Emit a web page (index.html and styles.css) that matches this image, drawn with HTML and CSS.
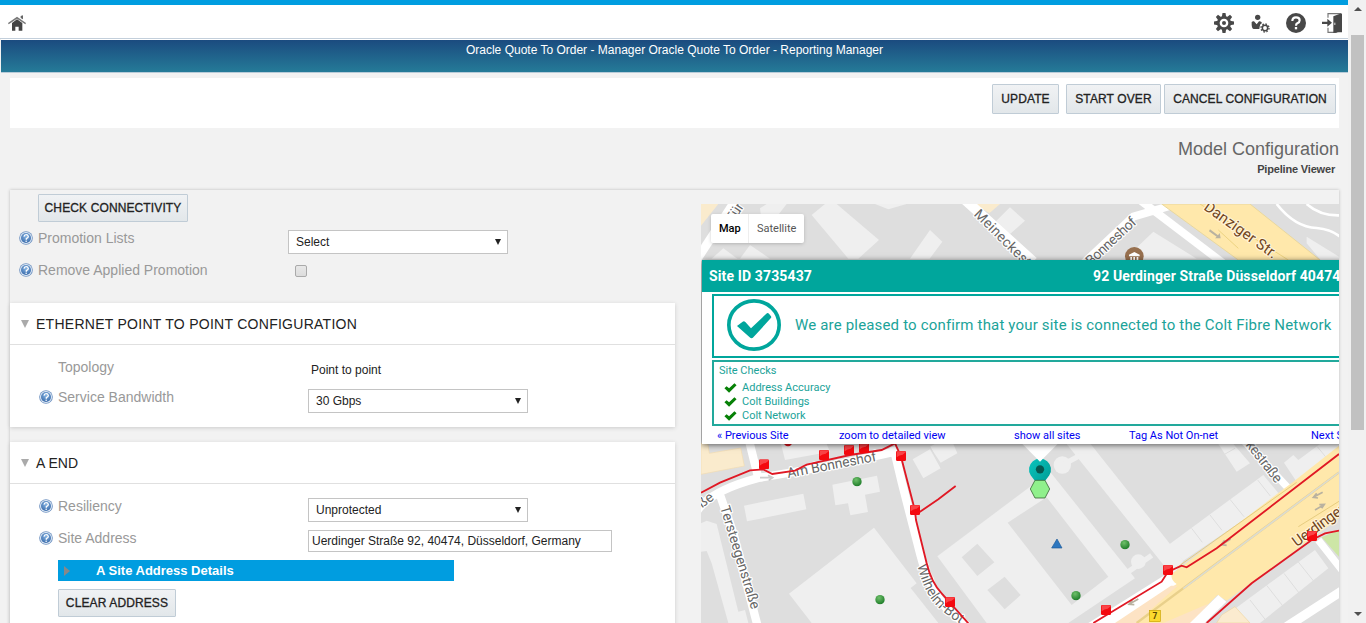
FILE: index.html
```html
<!DOCTYPE html>
<html lang="en">
<head>
<meta charset="utf-8">
<title>Model Configuration</title>
<link rel="stylesheet" href="styles.css">
</head>
<body>
<svg width="0" height="0" class="defs">
  <defs>
    <radialGradient id="helpFill" cx=".5" cy=".35" r=".7"><stop offset="0" stop-color="#86b4e2"/><stop offset="1" stop-color="#3567a8"/></radialGradient>
    <radialGradient id="dotFill" cx=".4" cy=".3" r=".7"><stop offset="0" stop-color="#6fc06a"/><stop offset="1" stop-color="#1f7d2a"/></radialGradient>
    <linearGradient id="pinFill" x1="0" y1="0" x2="1" y2="1"><stop offset="0" stop-color="#08c4bd"/><stop offset="1" stop-color="#009790"/></linearGradient>
    <symbol id="help" viewBox="0 0 42 42">
      <circle cx="21" cy="21" r="20.5" fill="#7194c2"/><circle cx="21" cy="21" r="18" fill="#dfe9f5"/><circle cx="21" cy="21" r="15" fill="url(#helpFill)"/>
      <path d="M15 17q1-6 6.500-6t6.500 5.500q0 3.500-6 6.500v3" fill="none" stroke="#fff" stroke-width="4"/><circle cx="21.500" cy="30.500" r="2.300" fill="#fff"/>
    </symbol>
    <symbol id="square" viewBox="0 0 30 30">
      <rect x="0" y="0" width="30" height="30" rx="4" fill="#f4090f"/><path d="M2 4q0-3 3-3h20q3 0 4 3l-9 7q-10 0-18 8z" fill="#fa4347"/>
    </symbol>
    <symbol id="dot" viewBox="0 0 30 30"><circle cx="15" cy="15" r="14" fill="url(#dotFill)"/></symbol>
    <symbol id="tick" viewBox="0 0 36 28"><path d="M1 15l6-6 7 6L29 1l6 5-21 21z" fill="#078107"/></symbol>
  </defs>
</svg>
<div class="window">
  <div class="page">
    <header class="topbar">
      <svg class="home" viewBox="24 45 54 51"><path d="M24 69L51 50l27 19-2 4-25-17-25 17z" fill="#777"/><path d="M36 69l15-11 16 11v23H56V80H46v12H36z" fill="#444"/><path d="M62 48l7-2v12l-7-4z" fill="#666"/></svg>
      <nav class="tools">
        <svg viewBox="342 39 60 60"><g fill="#484848"><circle cx="372" cy="69" r="21"/><g id="teeth"><path d="M367.500 39h9l2 12h-13zM367.500 99h9l2-12h-13z"/><path d="M342 64.500v9l12 2V62.500zM402 64.500v9l-12 2V62.500z"/></g><use href="#teeth" transform="rotate(45 372 69)"/></g><circle cx="372" cy="69" r="13" fill="#fff"/><circle cx="372" cy="69" r="6" fill="#484848"/></svg>
        <svg viewBox="450 39 60 60"><circle cx="473" cy="52" r="8" fill="#484848"/><path d="M455 66q3-3 7-2l8 9 7-9q7-1 9 5-7 4-7 11l-1 7h-17q-7-1-6-21z" fill="#484848"/><circle cx="495" cy="84" r="8" fill="none" stroke="#484848" stroke-width="4.500"/><circle cx="495" cy="84" r="12" fill="none" stroke="#484848" stroke-width="4" stroke-dasharray="4.700 4.700"/></svg>
        <svg viewBox="558 39 60 60"><circle cx="588" cy="69" r="30" fill="#484848"/><path d="M577 63q0-11 11-11 11 0 11 9 0 6-7 9-4 2-4 7" fill="none" stroke="#fff" stroke-width="6.500"/><rect x="584.500" y="81" width="7" height="7" fill="#fff"/></svg>
        <svg viewBox="666 39 60 60"><path d="M684 53V41h40M684 83v14h26" fill="none" stroke="#777" stroke-width="3.500"/><path d="M700 49l20-8h6v56h-10l-16 2z" fill="#484848"/><path d="M666 65h16v-9l14 12-14 12v-8h-16z" fill="#484848"/><rect x="703" y="68" width="3" height="7" fill="#ddd"/></svg>
      </nav>
    </header>
    <div class="banner">Oracle Quote To Order - Manager Oracle Quote To Order - Reporting Manager</div>
    <div class="actions">
      <button class="btn update">UPDATE</button><button class="btn restart">START OVER</button><button class="btn cancel">CANCEL CONFIGURATION</button>
    </div>
    <div class="heading"><h1>Model Configuration</h1><h2>Pipeline Viewer</h2></div>
    <main class="panel">
      <div class="form">
        <button class="btn connect">CHECK CONNECTIVITY</button>
        <div class="row"><svg class="help"><use href="#help"/></svg><span class="label">Promotion Lists</span><div class="select">Select<i></i></div></div>
        <div class="row"><svg class="help"><use href="#help"/></svg><span class="label">Remove Applied Promotion</span><span class="check"></span></div>
        <section class="card first">
          <h3><i></i><span class="wide">ETHERNET POINT TO POINT CONFIGURATION</span></h3>
          <div class="body">
            <div class="row"><span class="help"></span><span class="label">Topology</span><span class="value">Point to point</span></div>
            <div class="row"><svg class="help"><use href="#help"/></svg><span class="label">Service Bandwidth</span><div class="select">30 Gbps<i></i></div></div>
          </div>
        </section>
        <section class="card second">
          <h3><i></i><span>A END</span></h3>
          <div class="body">
            <div class="row"><svg class="help"><use href="#help"/></svg><span class="label">Resiliency</span><div class="select">Unprotected<i></i></div></div>
            <div class="row"><svg class="help"><use href="#help"/></svg><span class="label">Site Address</span><div class="input">Uerdinger Straße 92, 40474, Düsseldorf, Germany</div></div>
            <div class="details"><i></i>A Site Address Details</div>
            <button class="btn clear">CLEAR ADDRESS</button>
          </div>
        </section>
      </div>
      <div class="map">
        <svg class="canvas" viewBox="701 204 638 419">
          <rect x="701" y="204" width="638" height="419" fill="#dedede"/>
          <!-- streets north of the site -->
          <g transform="translate(700 195) scale(.33333)">
            <path d="M3 27h52L3 92z" fill="#faebcd"/>
            <path d="M110 10L-10 195" stroke="#fff" stroke-width="26"/>
            <g fill="#efefef"><path d="M335 60l40-33h35l127 108-62 56h-30zM630 191l60-86 37 35-38 51zM35 191l35-31 42 31zM525 27h95l-55 16zM180 40l20-13h60l-70 90zM150 150l60 41h-90zM885 82l45-45 45 40-45 40zM1275 191l85-81 130 81zM1820 125l97 60v10h-55l-42-50z"/></g>
            <path d="M825 27h75l-32 28z" fill="#faebcd"/>
            <g fill="none" stroke="#fff"><path d="M790 10l210 190" stroke-width="30"/><path d="M1140 215l160-150 120-35M1320 15l250 190" stroke-width="24"/><path d="M1730 27q55 70 120 72 50 5 77 32M1820 27q40 36 100 34" stroke-width="8"/></g>
            <path d="M1385 27h265l210 168h-245z" fill="#ffe8ab" stroke="#e8d79f" stroke-width="3"/>
            <path d="M1500 27l265 168M1555 105l60 55" stroke="#e9cf78" stroke-width="2.500"/>
            <path d="M1530 103l24 18 5-7 3 16h-17l5-5-23-16z" fill="#b9b2a0"/>
            <circle cx="1303" cy="184" r="28" fill="#97704f"/><path d="M1287 179l16-8 16 8v5h-32zM1291 186h5v12h-5zM1300 186h5v12h-5zM1310 186h5v12h-5z" fill="#fff"/>
            <g class="street">
              <text transform="translate(100 84) rotate(-57)">Für</text>
              <text transform="translate(820 60) rotate(45)" textLength="222">Meineckest</text>
              <text transform="translate(1173 214) rotate(-43)" textLength="190">Bonneshof</text>
              <text class="major" transform="translate(1509 42) rotate(35.500)" textLength="258">Danziger Str.</text>
            </g>
          </g>
          <!-- streets south of the site -->
          <g transform="translate(700 440) scale(.33333)">
            <path d="M3 10h20l5 30 94-16 11 54L3 103z" fill="#faebcd" stroke="#f3ddb0" stroke-width="2"/>
            <g fill="#efefef">
              <path d="M243 12l12 48 135-25-10-23zM132 197l178-36 9 47-178 36zM397 134l134-27 9 48-45 9 9 52-53 10-7-36-38 6zM267 461l255-198 128 167-18 14 83 105H335z"/>
              <path d="M3 250l17-8 30 10 65 263 20-5 10 39H85L35 370l-15-37-17 2zM638 58l52-30 32 57-52 30zM690 20l15-8h55l12 28-50 28z"/>
              <path d="M712 349L1050 95l20 25 235 295-200 134H860zM1100 12h72l278 350-25 38-30-20z"/>
              <circle cx="1087" cy="75" r="26"/><circle cx="1315" cy="365" r="22"/>
              <path d="M1405 315l285-210 50 60-290 197zM1555 12h45l50 58-40 25zM1752 68l28-23 15 15 65-48h57v33l-127 80zM1600 510l245-180 40 55-205 164h-50z"/>
            </g>
            <path d="M1087 75l52-28M1275 402l80-56" stroke="#efefef" stroke-width="16"/>
            <path d="M785 352l47-41 51 56-51 41zM862 450l52-40 48 55-48 43zM923 248l117-76 185 238-110 85z" fill="#dedede"/>
            <path d="M1475 265l32 42M1530 225l36 46M1590 178l42 52M1673 120l38 48M1570 45l35-20M1650 480l50 64M1700 436l50 64M1752 400l46 60M1795 366l48 60M1852 20l45 55M690 20l34 65" stroke="#dedede" stroke-width="3"/>
            <g fill="none" stroke="#fff">
              <path d="M148 5l26 105M-10 215q38-62 185-101 120-20 245-42l165-37M55 150l45 130 72 275M580 20l26 110 54 210q28 110 80 165l70 60" stroke-width="25"/>
              <path d="M1625-5l145 155M1855 300l72 92" stroke-width="22"/><path d="M1760 560l170-110" stroke-width="28"/>
            </g>
            <path d="M1165 549l245-154 40 35-195 119z" fill="#fff"/>
            <path d="M1415 402l365-277 137-108v218l-337 247-28-17-80 84h-217l175-117q-19-12-15-30z" fill="#ffe8ab"/>
            <path d="M1245 549l168-112h20l-125 112zM1390 549l135-58-43 58z" fill="#fde3c4"/>
            <path d="M1470 549l85-84 24 20-65 64z" fill="#fff"/>
            <path d="M1310 549l607-452" stroke="#e9d08b" stroke-width="7"/><path d="M1450 446l467-349" stroke="#dcdcd0" stroke-width="5"/><path d="M1420 390l370-263M1795 260l122-76" stroke="#e6cc7e" stroke-width="3"/>
            <path d="M1865 292l52-22v80z" fill="#cde6a6"/><path d="M1565 525l40-25 45 49h-100z" fill="#fbebcf" stroke="#f0d6a0" stroke-width="2"/>
            <g fill="none" stroke="#b9b2a0" stroke-width="5"><path d="M1868 157l-28 15m10-12l-10 12 14 2M1845 210l27-16m-14 0l15-1-8 12M1592 297l-28 17m10-13l-10 13 16 2M1315 477l-28 16m10-13l-10 13 16 1"/><path d="M180 113h36m-12-7l14 7-12 8" stroke="#ccc"/></g>
            <g class="street">
              <text transform="translate(264 114) rotate(-11)" textLength="272">Am Bonneshof</text>
              <text transform="translate(60 202) rotate(73)" textLength="322">Tersteegenstraße</text>
              <text transform="translate(6 205) rotate(-36)">ße</text>
              <path id="wilhelm" d="M652 376q17 70 50 112 34 40 130 96" fill="none"/>
              <text><textPath href="#wilhelm">Wilhelm-Bot</textPath></text>
              <text transform="translate(1636 15) rotate(52)" textLength="148">kestraße</text>
              <text class="major" transform="translate(1790 322) rotate(-36)" textLength="184">Uerdinger</text>
            </g>
            <path d="M3 158l57-30 90-37 40-3 27 14 68-10 35-18 130-29 95-15 40-20 18 40 42 162 3 28 32 130q15 60 45 90l80 90M650 222l65-44 52-40M1180 549l205-124 19-30 41-18 15 5 90-57 367-283M1520 549l135-119 180-130 40-20 42-8" fill="none" stroke="#e01824" stroke-width="5.500"/>
            <circle cx="264" cy="6" r="13" fill="#d9101a"/>
            <g id="nodes">
              <use href="#square" x="177" y="58" width="30" height="30"/><use href="#square" x="357" y="30" width="30" height="30"/><use href="#square" x="432" y="15" width="30" height="30"/><use href="#square" x="477" y="9" width="30" height="30"/><use href="#square" x="588" y="33" width="30" height="30"/><use href="#square" x="630" y="195" width="30" height="30"/><use href="#square" x="735" y="471" width="30" height="30"/><use href="#square" x="1389" y="375" width="30" height="30"/><use href="#square" x="1203" y="495" width="30" height="30"/><use href="#square" x="1821" y="273" width="30" height="30"/>
              <use href="#dot" x="456" y="110" width="30" height="30"/><use href="#dot" x="525" y="464" width="30" height="30"/><use href="#dot" x="1260" y="299" width="30" height="30"/><use href="#dot" x="1113" y="452" width="30" height="30"/>
            </g>
            <path d="M1071 297l15 27h-31z" fill="#2d77bf" stroke="#1e5b98" stroke-width="2"/>
            <rect x="1349" y="511" width="32" height="34" fill="#fbd92f" stroke="#c9a400" stroke-width="2"/><text x="1365" y="536" class="badge">7</text>
            <path d="M1020 146q-15-24-28-40a33 33 0 1 1 56 0q-13 16-28 40z" fill="url(#pinFill)"/><circle cx="1020" cy="88" r="12.500" fill="#065750"/>
            <path d="M991 147l14-26h30l14 26-14 27h-30z" fill="#90f08c" stroke="#3c6b3a" stroke-width="2.500"/>
            <path d="M965 10h110l-55 55z" fill="#fff"/>
          </g>
        </svg>
        <div class="maptype"><b>Map</b><span>Satellite</span></div>
        <div class="info">
          <div class="info-title"><span class="site">Site ID 3735437</span><span class="addr">92 Uerdinger Straße Düsseldorf 40474</span></div>
          <div class="confirm">
            <svg viewBox="81 312 162 156"><ellipse cx="162" cy="390" rx="75.500" ry="72.500" fill="none" stroke="#00a69c" stroke-width="11"/><path d="M111 393l17-13q4-3 8 1l17 19 46-44q4-4 8 0l6 8q2 3-1 6l-52 57q-5 6-11 0z" fill="#00a69c"/></svg>
            <span>We are pleased to confirm that your site is connected to the Colt Fibre Network</span>
          </div>
          <div class="checks">
            <p>Site Checks</p>
            <ul><li><svg><use href="#tick"/></svg>Address Accuracy</li><li><svg><use href="#tick"/></svg>Colt Buildings</li><li><svg><use href="#tick"/></svg>Colt Network</li></ul>
          </div>
          <div class="links"><a>« Previous Site</a><a>zoom to detailed view</a><a>show all sites</a><a>Tag As Not On-net</a><a>Next Site</a></div>
        </div>
      </div>
    </main>
  </div>
  <div class="scrollbar"><i class="up"></i><div class="thumb"></div><i class="down"></i></div>
</div>
</body>
</html>
```
FILE: styles.css
```css
* { box-sizing: border-box; }
body { margin: 0; overflow: hidden; font: 12px/14px "Liberation Sans", Arial, sans-serif; color: #222; background: #f2f2f2; }
h1, h2, h3, p, ul { margin: 0; padding: 0; font-weight: normal; }
.defs { position: absolute; }
.window { display: flex; height: 623px; overflow: hidden; }
.page { width: 1348px; height: 623px; overflow: hidden; }

.topbar { display: flex; justify-content: space-between; align-items: flex-start; height: 39px; padding: 8px 6px 0 8px; background: #fff; border-top: 5px solid #009de0; border-bottom: 1px solid #c3cfdb; }
.home { width: 18px; height: 17px; margin-top: 2px; }
.tools { display: flex; gap: 16px; }
.tools svg { width: 20px; height: 20px; }
.banner { height: 34px; margin: 0 0 5px 1px; padding-top: 3px; border-top: 1px solid #fff; border-bottom: 1px solid #b8cbd8; background: linear-gradient(#1b4b7f, #257b98); color: #fff; text-align: center; }

.btn { height: 28px; padding: 0; border: 1px solid #c0ccd6; border-radius: 1px; background: linear-gradient(#f0f2f4, #e2e7ea); color: #222; font: 12px "Liberation Sans", Arial, sans-serif; letter-spacing: .12px; -webkit-text-stroke: .3px #222; white-space: nowrap; }
.actions { display: flex; justify-content: flex-end; height: 50px; margin: 0 9px 0 10px; padding: 6px 3px 0 0; background: #fff; }
.actions .btn { height: 30px; }
.update { width: 67px; margin-right: 7px; }
.restart { width: 95px; margin-right: 3px; }
.cancel { width: 172px; }
.heading { height: 62px; padding: 10px 9px 0 0; text-align: right; }
.heading h1 { font-size: 18px; line-height: 22px; color: #666; }
.heading h2 { padding: 2px 4px 0 0; font-size: 11px; font-weight: bold; letter-spacing: -.18px; color: #444; }

.panel { display: flex; justify-content: space-between; height: 450px; margin: 0 9px 0 10px; box-shadow: 0 0 3px #bbb; }
.form { width: 665px; padding-top: 4px; }
.connect { display: block; width: 150px; margin-left: 28px; }
.row { display: flex; align-items: center; height: 32px; padding-left: 9px; }
.help { width: 14px; height: 14px; margin-right: 5px; }
.label { width: 250px; font-size: 14px; line-height: 16px; color: #999; }
.select { display: flex; align-items: center; justify-content: space-between; width: 220px; height: 24px; margin-top: 8px; padding: 0 6px 0 7px; border: 1px solid #c4c4c4; background: #fff; }
.select i { border: 3.500px solid transparent; border-top: 6px solid #222; border-bottom: 0; }
.check { width: 12px; height: 12px; margin: 2px 0 0 7px; border: 1px solid #aaa; border-radius: 2px; background: linear-gradient(#e8e8e8, #dcdcdc); }
.card { background: #fff; box-shadow: 0 1px 4px #ccc; }
.first { height: 124px; margin-top: 17px; }
.second { height: 210px; margin-top: 15px; }
.card h3 { display: flex; align-items: center; height: 42px; padding-left: 11px; border-bottom: 1px solid #e0e0e0; font-size: 14px; }
.card h3 i { margin-right: 7px; border: 4px solid transparent; border-top: 8px solid #aaa; border-bottom: 0; }
.wide { letter-spacing: .27px; }
.body { padding: 6px 0 0 20px; }
.first .body { padding-top: 7px; }
.first .row { height: 30px; }
.value { margin: 5px 0 0 3px; }
.input { width: 304px; height: 22px; margin-top: 6px; padding: 3px; border: 1px solid #c4c4c4; background: #fff; white-space: nowrap; }
.details { display: flex; align-items: center; width: 396px; height: 21px; margin: 6px 0 8px 28px; padding-left: 6px; background: #009de0; color: #fff; font-size: 13px; font-weight: bold; }
.details i { margin-right: 26px; border: 5px solid transparent; border-left: 6px solid #888; border-right: 0; }
.clear { width: 118px; margin-left: 28px; display: block; }

.map { position: relative; width: 638px; height: 419px; margin-top: 14px; overflow: hidden; font-family: Roboto, sans-serif; }
.canvas { display: block; width: 638px; height: 419px; }
.street { font: 42px Roboto, sans-serif; fill: #666; stroke: #fff; stroke-width: 7px; paint-order: stroke; stroke-linejoin: round; }
.major { font-size: 45px; fill: #71451c; stroke: #fff4d8; }
#wilhelm { stroke: none; }
.badge { font: bold 25px Roboto, sans-serif; text-anchor: middle; fill: #5b4800; }
.maptype { position: absolute; left: 10px; top: 10px; display: flex; align-items: center; height: 29px; background: #fff; border-radius: 2px; box-shadow: 0 1px 4px -1px rgba(0,0,0,.3); font-size: 11px; color: #565656; }
.maptype b { width: 38px; padding-left: 8px; border-right: 1px solid #eee; line-height: 29px; font-weight: 500; color: #000; }
.maptype span { width: 55px; padding-left: 8px; }
.info { position: absolute; left: 1px; top: 56px; width: 690px; height: 184px; background: #fff; box-shadow: 0 1px 6px rgba(0,0,0,.6); }
.info-title { display: flex; align-items: center; height: 32px; padding-left: 7px; background: #00a69c; color: #fff; font-size: 14px; font-weight: bold; letter-spacing: .13px; white-space: nowrap; }
.site { width: 384px; }
.confirm { display: flex; align-items: flex-start; height: 64px; margin: 2px 0 2px 10px; padding: 3px 0 0 13px; border: 2px solid #00a69c; color: #1ba399; font-size: 15px; white-space: nowrap; }
.confirm svg { width: 54px; height: 52px; margin-right: 14px; }
.confirm span { letter-spacing: .17px; line-height: 52px; }
.checks { height: 66px; margin-left: 10px; padding: 2px 0 0 5px; border: 2px solid #22a99c; color: #1ba399; font-size: 11px; }
.checks p { margin-bottom: 3px; }
.checks ul { list-style: none; }
.checks li { display: flex; align-items: center; height: 14px; }
.checks svg { width: 13px; height: 10px; margin: 0 5px 0 5px; }
.links { display: grid; grid-template-columns: 122px 175px 115px 182px auto; padding: 3px 0 0 15px; font-size: 11px; color: #0000f0; white-space: nowrap; }

.scrollbar { display: flex; flex-direction: column; align-items: center; width: 18px; background: #f1f1f1; padding: 7px 0 0 1px; }
.scrollbar i { border: 4px solid transparent; }
.scrollbar .up { border-bottom: 4px solid #505050; border-top: 0; }
.scrollbar .down { border-top: 4px solid #505050; border-bottom: 0; margin-top: 182px; }
.thumb { width: 13px; height: 395px; margin-top: 24px; background: #c1c1c1; }
```
